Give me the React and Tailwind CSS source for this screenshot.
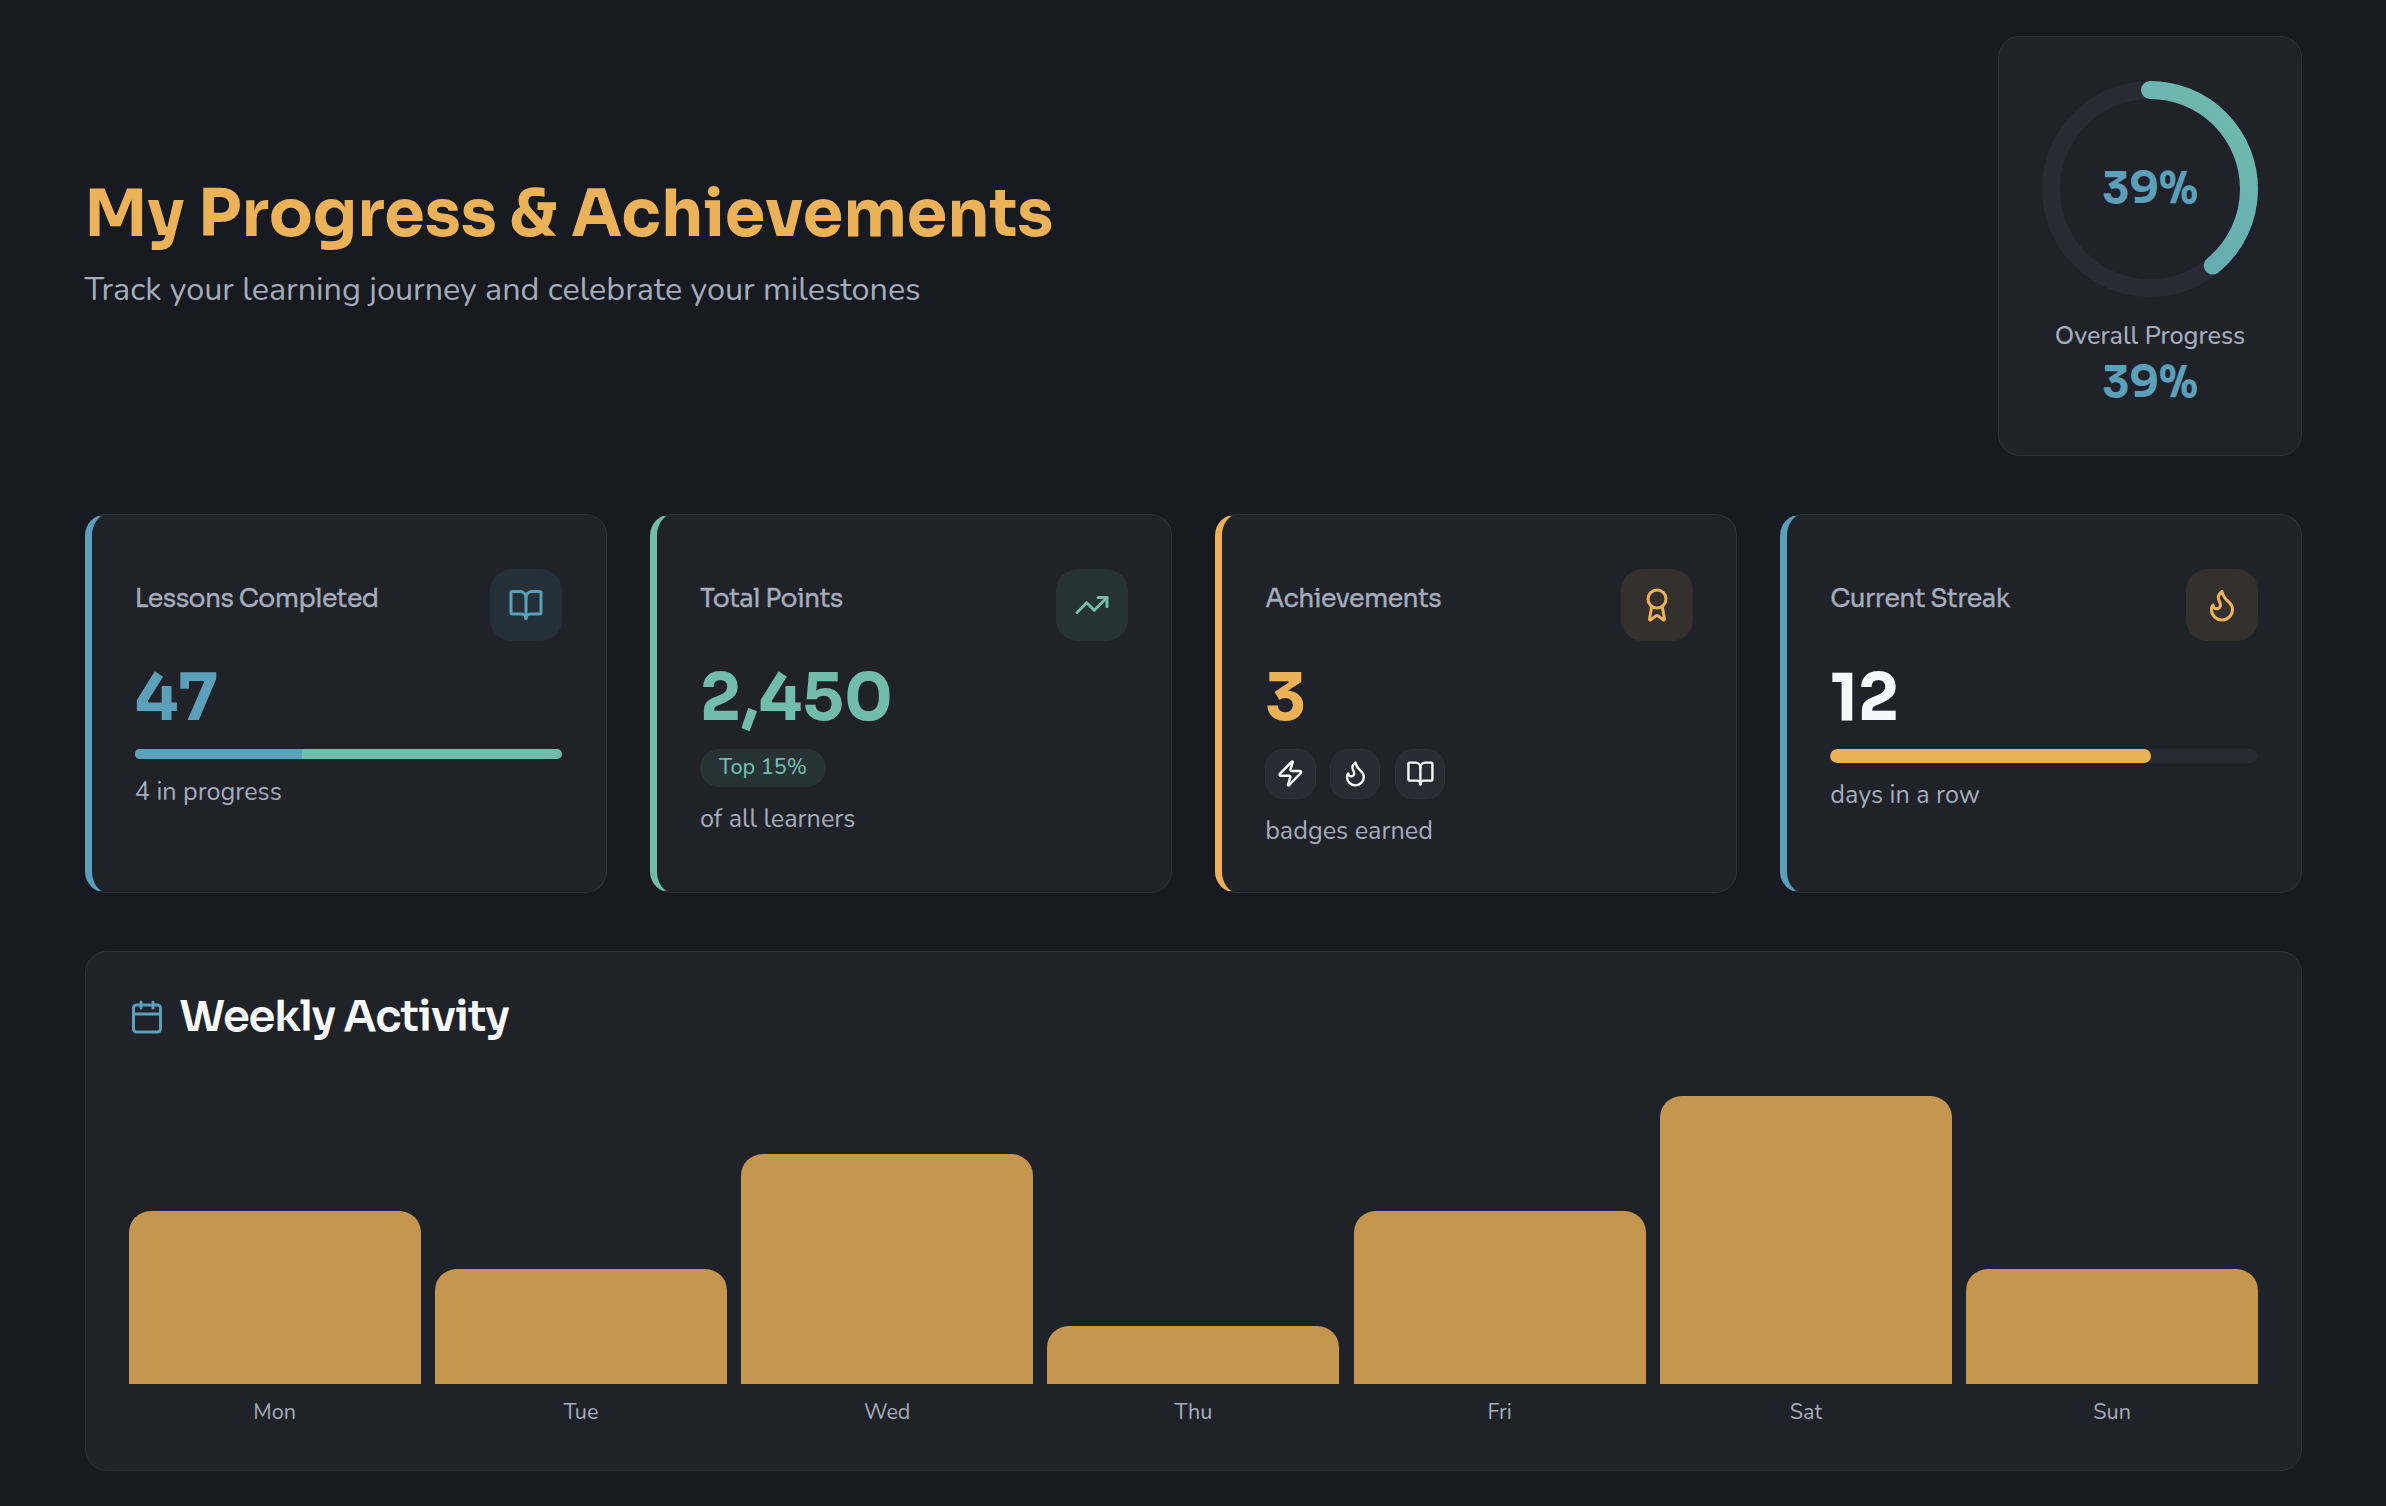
import React from "react";
import { Award, BookOpen, Calendar, Flame, TrendingUp, Zap } from "lucide-react";

const sora = "font-['Sora','Inter',sans-serif]";

const days = [
  { day: "Mon", value: 60 },
  { day: "Tue", value: 40 },
  { day: "Wed", value: 80 },
  { day: "Thu", value: 20 },
  { day: "Fri", value: 60 },
  { day: "Sat", value: 100 },
  { day: "Sun", value: 40 },
];

function ProgressRing({ percent }) {
  const r = 55;
  const length = 2 * Math.PI * r;
  return (
    <div className="relative size-[120px]">
      <svg viewBox="0 0 120 120" className="size-full -rotate-90">
        <defs>
          <linearGradient id="ring" x1="0%" y1="0%" x2="100%" y2="100%">
            <stop offset="0%" stopColor="#5b9fb8" />
            <stop offset="100%" stopColor="#72bcad" />
          </linearGradient>
        </defs>
        <circle cx="60" cy="60" r={r} fill="none" stroke="#282b33" strokeWidth="10" />
        <circle
          cx="60"
          cy="60"
          r={r}
          fill="none"
          stroke="url(#ring)"
          strokeWidth="10"
          strokeLinecap="round"
          strokeDasharray={length}
          strokeDashoffset={length * (1 - percent / 100)}
        />
      </svg>
      <div className="absolute inset-0 flex items-center justify-center">
        <span className={`${sora} text-2xl font-bold text-[#5b9fb8]`}>{percent}%</span>
      </div>
    </div>
  );
}

function StatCard({ title, value, note, Icon, edge, valueColor, iconStyle, children }) {
  return (
    <div className={`h-[211px] rounded-[12px] border border-[#2e323b] border-l-4 bg-[#20222a] px-6 pt-[30.05px] ${edge}`}>
      <div className="flex items-start justify-between">
        <h3 className={`${sora} mt-[7px] text-sm font-medium tracking-[-0.022em] text-[#a4acb9] [-webkit-text-stroke:0.2px_#a4acb9]`}>{title}</h3>
        <div className={`flex size-10 items-center justify-center rounded-[12px] ${iconStyle}`}>
          <Icon size={20} />
        </div>
      </div>
      <div className={`${sora} mt-3 text-4xl font-bold ${valueColor}`}>{value}</div>
      <div className="mt-2">{children}</div>
      <p className="mt-2 text-sm text-[#a4acb9]">{note}</p>
    </div>
  );
}

export default function App() {
  return (
    <div className="min-h-screen overflow-hidden bg-[#171a21]">
      <div className="[zoom:1.8] ml-[47px] w-[1232px] pt-[20.2px] font-['Nunito','Noto_Sans',sans-serif] text-[#f7f8fa]">
        <header className="flex items-center justify-between">
          <div>
            <h1 className={`${sora} text-4xl font-bold text-[#ecb25a]`}>My Progress &amp; Achievements</h1>
            <p className="mt-2 text-lg text-[#a4acb9]">Track your learning journey and celebrate your milestones</p>
          </div>
          <div className="flex flex-col items-center rounded-[12px] border border-[#2e323b] bg-[#20222a] p-6">
            <ProgressRing percent={39} />
            <p className="mt-3 text-sm font-medium text-[#a4acb9]">Overall Progress</p>
            <p className={`${sora} text-2xl font-bold text-[#5b9fb8]`}>39%</p>
          </div>
        </header>

        <section className="mt-8 grid grid-cols-4 gap-6">
          <StatCard title="Lessons Completed" value="47" note="4 in progress" Icon={BookOpen} edge="border-l-[#5b9fb8]" valueColor="text-[#5b9fb8]" iconStyle="bg-[#252f37] text-[#5b9fb8]">
            <div className="flex h-1.5 overflow-hidden rounded-full bg-[#72bcad]">
              <div className="w-[39.2%] bg-[#5b9fb8]" />
            </div>
          </StatCard>
          <StatCard title="Total Points" value="2,450" note="of all learners" Icon={TrendingUp} edge="border-l-[#72bcad]" valueColor="text-[#72bcad]" iconStyle="bg-[#273237] text-[#72bcad]">
            <div className="flex">
              <span className="rounded-full border border-transparent bg-[#273237] px-2.5 py-0.5 text-xs font-medium text-[#72bcad]">Top 15%</span>
            </div>
          </StatCard>
          <StatCard title="Achievements" value="3" note="badges earned" Icon={Award} edge="border-l-[#ecb25a]" valueColor="text-[#ecb25a]" iconStyle="bg-[#34302e] text-[#ecb25a]">
            <div className="flex gap-2">
              {[Zap, Flame, BookOpen].map((Badge, i) => (
                <div key={i} className="flex size-7 items-center justify-center rounded-[10px] border border-[#2e323b] bg-[#282b33]">
                  <Badge size={16} />
                </div>
              ))}
            </div>
          </StatCard>
          <StatCard title="Current Streak" value="12" note="days in a row" Icon={Flame} edge="border-l-[#5b9fb8]" valueColor="text-[#f7f8fa]" iconStyle="bg-[#34302e] text-[#ecb25a]">
            <div className="h-2 overflow-hidden rounded-full bg-[#282b33]">
              <div className="h-full w-3/4 rounded-full bg-[#ecb25a]" />
            </div>
          </StatCard>
        </section>

        <section className="mt-8 rounded-[12px] border border-[#2e323b] bg-[#20222a] p-6">
          <h2 className={`${sora} flex items-center gap-2 text-2xl leading-none font-semibold tracking-tight`}>
            <Calendar size={20} className="text-[#5b9fb8]" />
            Weekly Activity
          </h2>
          <div className="mt-8 flex gap-2">
            {days.map(({ day, value }) => (
              <div key={day} className="flex flex-1 flex-col">
                <div className="flex h-40 items-end">
                  <div className="w-full rounded-t-[12px] bg-[#c4964f]" style={{ height: `${value}%` }} />
                </div>
                <div className="mt-2 text-center text-xs text-[#a4acb9]">{day}</div>
              </div>
            ))}
          </div>
        </section>
      </div>
    </div>
  );
}
